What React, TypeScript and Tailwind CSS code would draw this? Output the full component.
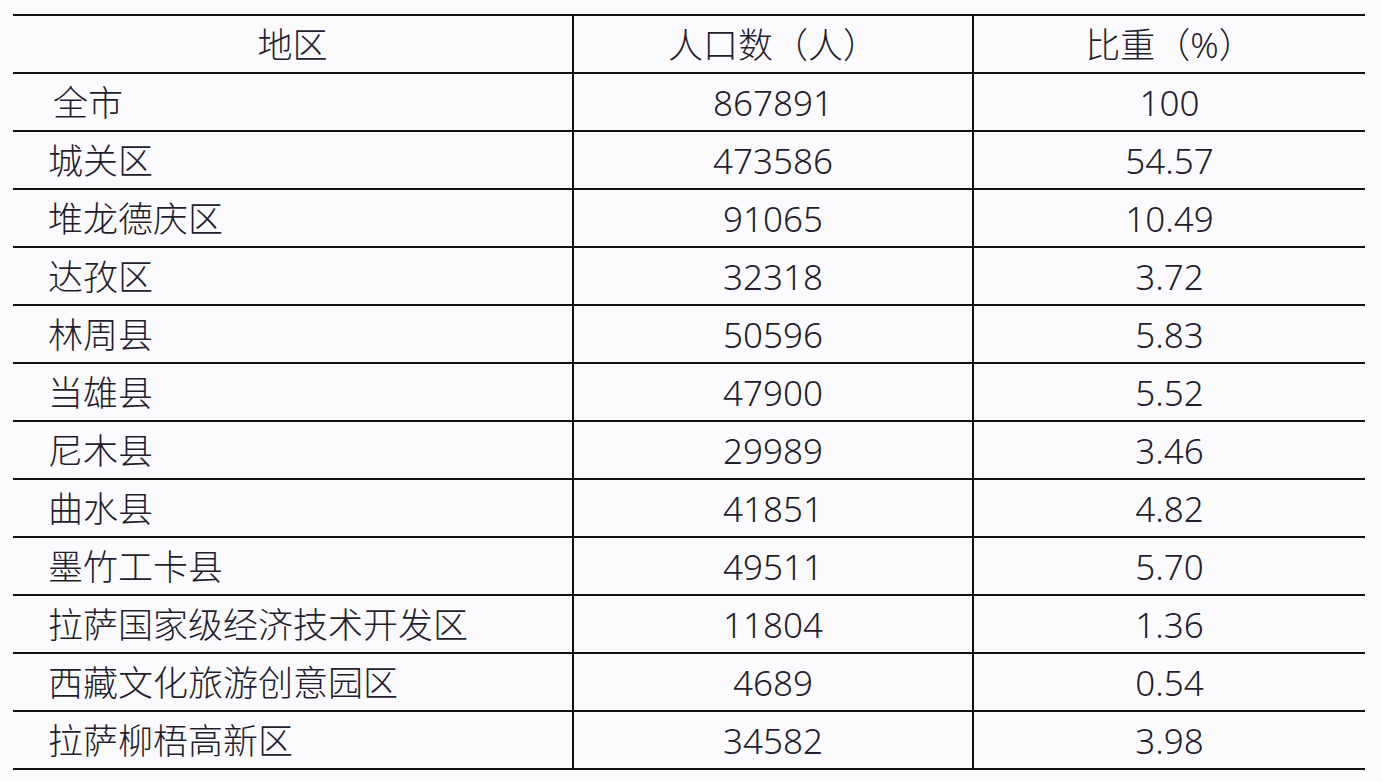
import React from 'react';

interface Row {
  region: string;
  population: string;
  share: string;
}

const rows: Row[] = [
  { region: '全市', population: '867891', share: '100' },
  { region: '城关区', population: '473586', share: '54.57' },
  { region: '堆龙德庆区', population: '91065', share: '10.49' },
  { region: '达孜区', population: '32318', share: '3.72' },
  { region: '林周县', population: '50596', share: '5.83' },
  { region: '当雄县', population: '47900', share: '5.52' },
  { region: '尼木县', population: '29989', share: '3.46' },
  { region: '曲水县', population: '41851', share: '4.82' },
  { region: '墨竹工卡县', population: '49511', share: '5.70' },
  { region: '拉萨国家级经济技术开发区', population: '11804', share: '1.36' },
  { region: '西藏文化旅游创意园区', population: '4689', share: '0.54' },
  { region: '拉萨柳梧高新区', population: '34582', share: '3.98' },
];

const App: React.FC = () => {
  return (
    <div
      className="w-[1382px] h-[782px] bg-[#fbfbfd] pt-[14px] pl-[13px] text-[#1f1d2e]"
      style={{ fontFamily: '"Noto Sans", "Noto Sans CJK SC", sans-serif' }}
    >
      <table className="border-collapse text-[35px] leading-none font-light">
        <thead>
          <tr className="h-[58px] border-y-2 border-[#111]">
            <th className="w-[560px] font-light text-center border-r-2 border-[#111]">地区</th>
            <th className="w-[400px] font-light text-center border-r-2 border-[#111]">人口数（人）</th>
            <th className="w-[392px] font-light text-center">比重（%）</th>
          </tr>
        </thead>
        <tbody>
          {rows.map((row, idx) => (
            <tr key={idx} className="h-[58px] border-b-2 border-[#111]">
              <td className={`text-left border-r-2 border-[#111] ${idx === 0 ? 'pl-[40px]' : 'pl-[35px]'}`}>
                {row.region}
              </td>
              <td className="text-center border-r-2 border-[#111]">{row.population}</td>
              <td className="text-center">{row.share}</td>
            </tr>
          ))}
        </tbody>
      </table>
    </div>
  );
};

export default App;
